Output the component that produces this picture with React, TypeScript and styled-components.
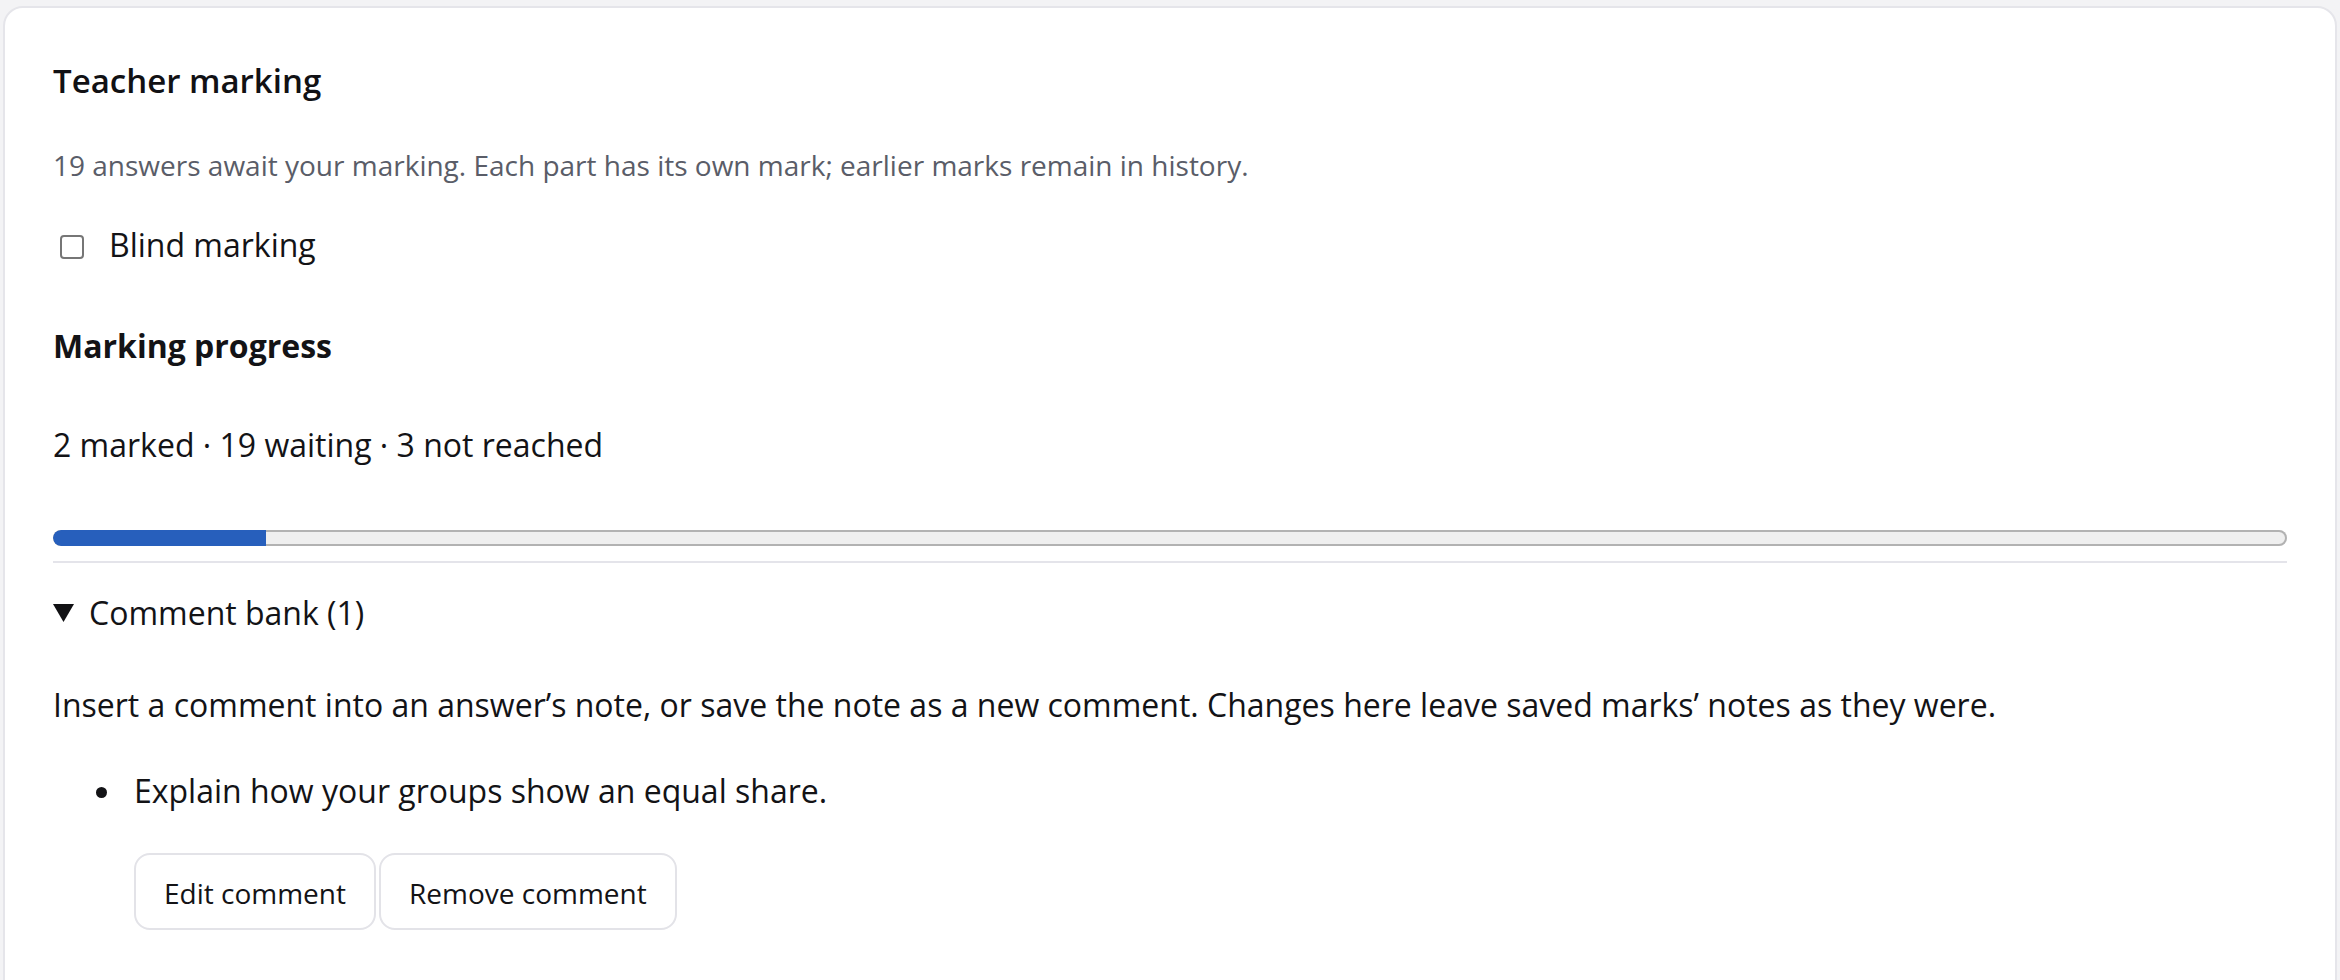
import React from "react";
import styled, { createGlobalStyle } from "styled-components";

const Global = createGlobalStyle`
  html, body { margin: 0; padding: 0; background: #f3f3f5; }
  body { font-family: "Open Sans", "Noto Sans", sans-serif; color: #131316; }
  * { box-sizing: border-box; }
`;

const Page = styled.div`
  padding: 6px 3px 0 3px;
`;

const Card = styled.section`
  background: #ffffff;
  border: 2px solid #e5e5ea;
  border-radius: 20px;
  padding: 48px 48px 60px 48px;
  min-height: 1000px;
`;

const Title = styled.h2`
  margin: 1px 0 0 0;
  font-size: 33px;
  line-height: 48px;
  font-weight: 600;
  color: #111114;
`;

const Lead = styled.p`
  margin: 40px 0 0 0;
  font-size: 28px;
  line-height: 40px;
  color: #5a5d68;
`;

const CheckRow = styled.label`
  display: flex;
  align-items: center;
  gap: 25px;
  margin-top: 38px;
  font-size: 32px;
  line-height: 44px;
  padding-left: 7px;
`;

const Box = styled.span`
  width: 24px;
  height: 24px;
  border: 2px solid #767676;
  border-radius: 4px;
  background: #fff;
  flex: none;
  margin-top: 3px;
`;

const SubHead = styled.h3`
  margin: 57px 0 0 0;
  font-size: 32px;
  line-height: 44px;
  font-weight: 700;
`;

const Text = styled.p<{ $gap: number }>`
  margin: ${(p) => p.$gap}px 0 0 0;
  font-size: 32px;
  line-height: 44px;
`;

const Track = styled.div`
  margin-top: 63px;
  height: 16px;
  border-radius: 8px;
  background: #efefef;
  box-shadow: inset 0 0 0 2px #b2b2b2;
  display: flex;
  overflow: hidden;
`;

const Fill = styled.div`
  height: 100%;
  background: #275fbc;
  border-radius: 8px 0 0 8px;
`;

const Rule = styled.hr`
  margin: 15px 0 0 0;
  border: none;
  height: 2px;
  background: #e4e4ea;
`;

const Details = styled.details`
  margin-top: 28px;
`;

const Summary = styled.summary`
  list-style: none;
  display: flex;
  align-items: center;
  gap: 15px;
  font-size: 32px;
  line-height: 44px;
  cursor: pointer;
  &::-webkit-details-marker { display: none; }
`;

const List = styled.ul`
  margin: 42px 0 0 0;
  padding-left: 81px;
  list-style: none;
  font-size: 32px;
  line-height: 44px;
`;

const Item = styled.li`
  position: relative;
  &::before {
    content: "";
    position: absolute;
    left: -38px;
    top: 18px;
    width: 11px;
    height: 11px;
    border-radius: 50%;
    background: #131316;
  }
`;

const Actions = styled.div`
  display: flex;
  gap: 3px;
  margin-top: 40px;
`;

const Button = styled.button`
  font-family: inherit;
  font-size: 28px;
  line-height: 37px;
  padding: 20px 28px 16px 28px;
  background: #fff;
  color: #131316;
  border: 2px solid #e3e3e8;
  border-radius: 16px;
  cursor: pointer;
`;

const Triangle = () => (
  <svg width="21" height="18" viewBox="0 0 21 18" aria-hidden="true">
    <path d="M0 0 H21 L10.5 18 Z" fill="#111114" />
  </svg>
);

export default function App() {
  const marked = 2;
  const waiting = 19;
  const pct = (marked / (marked + waiting)) * 100;
  return (
    <Page>
      <Global />
      <Card>
        <Title>Teacher marking</Title>
        <Lead>
          19 answers await your marking. Each part has its own mark; earlier marks remain in history.
        </Lead>
        <CheckRow>
          <Box />
          Blind marking
        </CheckRow>
        <SubHead>Marking progress</SubHead>
        <Text $gap={55}>2 marked · 19 waiting · 3 not reached</Text>
        <Track>
          <Fill style={{ width: `${pct}%` }} />
        </Track>
        <Rule />
        <Details open>
          <Summary>
            <Triangle />
            Comment bank (1)
          </Summary>
          <Text $gap={48}>
            Insert a comment into an answer’s note, or save the note as a new comment. Changes here leave saved marks’ notes as they were.
          </Text>
          <List>
            <Item>
              Explain how your groups show an equal share.
              <Actions>
                <Button>Edit comment</Button>
                <Button>Remove comment</Button>
              </Actions>
            </Item>
          </List>
        </Details>
      </Card>
    </Page>
  );
}
